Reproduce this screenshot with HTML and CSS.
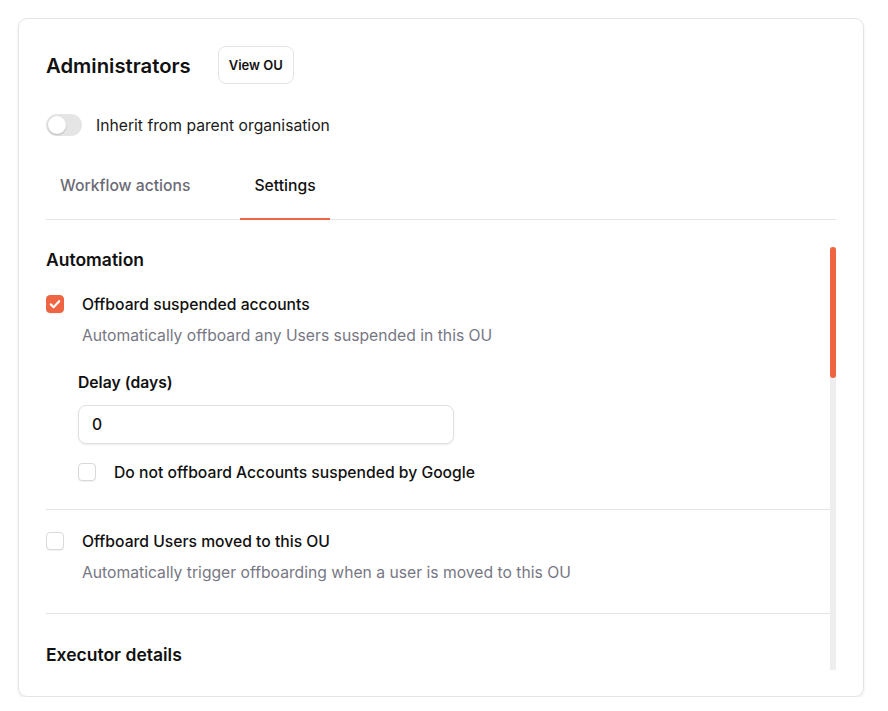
FILE: index.html
```html
<!DOCTYPE html>
<html lang="en">
<head>
<meta charset="utf-8">
<title>Administrators</title>
<link rel="stylesheet" href="styles.css">
</head>
<body>
<div class="card">
  <div class="header">
    <h1 class="title">Administrators</h1>
    <button class="btn">View OU</button>
  </div>
  <div class="toggle-row">
    <span class="toggle"><span class="knob"></span></span>
    <span class="toggle-label">Inherit from parent organisation</span>
  </div>
  <div class="tabs">
    <div class="tab">Workflow actions</div>
    <div class="tab active">Settings</div>
  </div>
  <div class="scroll">
    <div class="scroll-content">
      <div class="section first">
        <h2 class="heading">Automation</h2>
        <div class="check-row">
          <span class="box checked"><svg viewBox="0 0 18 18" width="18" height="18"><path d="M4.8 9.4l2.8 2.8L13.2 6.2" fill="none" stroke="#fff" stroke-width="2.2" stroke-linecap="round" stroke-linejoin="round"/></svg></span>
          <span class="check-label">Offboard suspended accounts</span>
        </div>
        <p class="desc">Automatically offboard any Users suspended in this OU</p>
        <div class="sub">
          <label class="field-label">Delay (days)</label>
          <div class="input">0</div>
          <div class="check-row sub-row">
            <span class="box"></span>
            <span class="check-label">Do not offboard Accounts suspended by Google</span>
          </div>
        </div>
      </div>
      <div class="section second">
        <div class="check-row">
          <span class="box"></span>
          <span class="check-label">Offboard Users moved to this OU</span>
        </div>
        <p class="desc">Automatically trigger offboarding when a user is moved to this OU</p>
      </div>
      <div class="section third">
        <h2 class="heading">Executor details</h2>
      </div>
    </div>
    <div class="scrollbar"><div class="thumb"></div></div>
  </div>
</div>
</body>
</html>
```

FILE: styles.css
```css
* { box-sizing: border-box; }
html, body { margin: 0; padding: 0; background: #fff; }
body {
  font-family: Inter, "Noto Sans", sans-serif;
  color: #111;
  padding: 18px 24px 0 18px;
}
.card {
  width: 846px;
  height: 679px;
  border: 1px solid #e4e4e4;
  border-radius: 9px;
  box-shadow: 0 2px 3px rgba(0,0,0,0.08);
  padding: 27px 27px 0 27px;
  display: flex;
  flex-direction: column;
  overflow: hidden;
}
.header {
  display: flex;
  align-items: center;
  gap: 27px;
  height: 38px;
}
.title {
  margin: 0;
  font-size: 20.3px;
  font-weight: 600;
}
.btn {
  font-family: inherit;
  font-size: 13px;
  font-weight: 600;
  color: #111;
  background: #fff;
  border: 1px solid #e4e4e4;
  border-radius: 8px;
  height: 38px;
  padding: 0 10px;
}
.toggle-row {
  margin-top: 30px;
  display: flex;
  align-items: center;
  gap: 14px;
  height: 22px;
}
.toggle {
  width: 36px;
  height: 22px;
  border-radius: 11px;
  background: #e5e5e5;
  display: flex;
  align-items: center;
  padding: 2px;
}
.knob {
  width: 18px;
  height: 18px;
  border-radius: 50%;
  background: #fff;
  box-shadow: 0 1px 2px rgba(0,0,0,0.2);
}
.toggle-label {
  font-size: 15.7px;
  color: #1a1a1a;
}
.tabs {
  margin-top: 14px;
  display: flex;
  gap: 36px;
  border-bottom: 1px solid #e5e5e5;
}
.tab {
  font-size: 15.7px;
  line-height: 20px;
  padding: 26px 14px 22px;
  color: #6b6b76;
  font-weight: 500;
  border-bottom: 2px solid transparent;
  margin-bottom: -1px;
}
.tab.active {
  color: #111;
  border-bottom-color: #ef6543;
}
.scroll {
  margin-top: 27px;
  height: 423px;
  display: flex;
}
.scroll-content {
  flex: 1;
  overflow: hidden;
}
.scrollbar {
  width: 6px;
  background: #eeeeee;
  flex: none;
}
.thumb {
  height: 131px;
  background: #ef6543;
  border-radius: 3px;
}
.section { border-bottom: 1px solid #e5e5e5; }
.section.first { padding-bottom: 26px; }
.section.second { padding-top: 20px; padding-bottom: 29px; }
.section.third { padding-top: 28px; border-bottom: 0; }
.heading {
  margin: 0;
  font-size: 17.5px;
  line-height: 26px;
  font-weight: 600;
}
.check-row {
  display: flex;
  align-items: center;
  gap: 18px;
  height: 22px;
}
.first .check-row { margin-top: 20px; }
.first .sub-row { margin-top: 17px; }
.box {
  width: 18px;
  height: 18px;
  border: 1px solid #d9d9d9;
  border-radius: 4px;
  background: #fff;
  box-shadow: 0 1px 1px rgba(0,0,0,0.06);
  flex: none;
  display: flex;
}
.box.checked {
  background: #ef6543;
  border-color: #ef6543;
}
.box.checked svg { margin: -1px; }
.check-label {
  font-size: 15.7px;
  font-weight: 500;
  color: #111;
}
.desc {
  margin: 10px 0 0 36px;
  font-size: 15.7px;
  line-height: 22px;
  color: #777784;
}
.sub {
  margin-left: 32px;
  margin-top: 25px;
}
.field-label {
  display: block;
  font-size: 15.7px;
  line-height: 22px;
  font-weight: 600;
  color: #111;
}
.input {
  margin-top: 11px;
  width: 376px;
  height: 39px;
  border: 1px solid #e0e0e0;
  border-radius: 8px;
  box-shadow: 0 1px 2px rgba(0,0,0,0.08);
  padding: 0 13px;
  display: flex;
  align-items: center;
  font-size: 15.7px;
  font-weight: 500;
}
```
